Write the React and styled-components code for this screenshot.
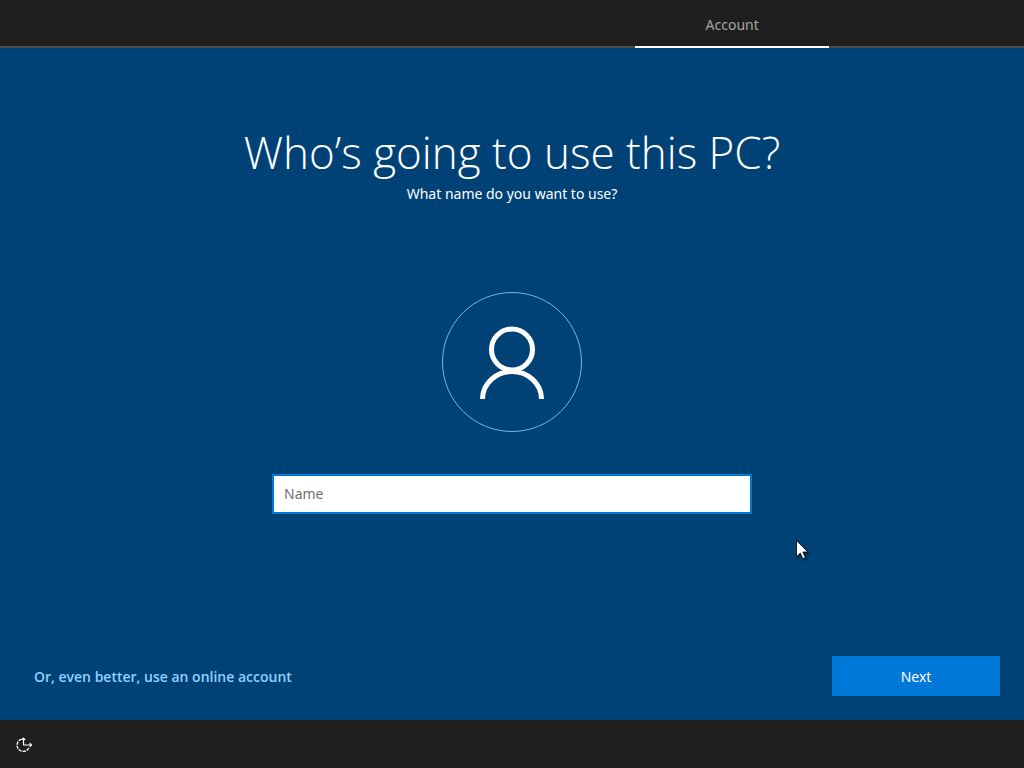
import React from 'react';
import styled, { createGlobalStyle } from 'styled-components';

const GlobalStyle = createGlobalStyle`
  *, *::before, *::after { box-sizing: border-box; }
  body {
    margin: 0;
    background: #004275;
    color: #fff;
    font: 14px/20px "Noto Sans", "Open Sans", sans-serif;
  }
`;

const Screen = styled.div`
  position: relative;
  display: flex;
  flex-direction: column;
  min-height: 100vh;
  overflow: hidden;
`;

const Steps = styled.nav`
  display: flex;
  justify-content: flex-end;
  height: 48px;
  background: #1f1f1f;
  box-shadow: inset 0 -2px #4b4b4b;
`;

const Step = styled.a`
  display: flex;
  align-items: center;
  justify-content: center;
  width: 19%;
  margin-right: 19%;
  padding-top: 2px;
  border-top: 2px solid transparent;
  border-bottom: 2px solid #fff;
  color: #a6a6a6;
  text-decoration: none;
`;

const Main = styled.main`
  flex: 1;
  display: flex;
  flex-direction: column;
  align-items: center;
  padding: 74px 24px 24px;
`;

const Title = styled.h1`
  margin: 0 0 2px;
  font-family: "Open Sans", "Noto Sans", sans-serif;
  font-size: 44px;
  line-height: 60px;
  font-weight: 300;
  text-align: center;
`;

const Prompt = styled.label`
  text-align: center;
`;

const Avatar = styled.svg`
  width: 140px;
  height: 140px;
  margin: 88px 0 42px;
  fill: none;
`;

const NameInput = styled.input`
  width: 480px;
  max-width: 100%;
  height: 40px;
  padding: 0 10px 2px;
  border: 2px solid #0078d7;
  border-radius: 0;
  outline: none;
  background: #fff;
  color: #000;
  font: inherit;

  &::placeholder { color: #717171; opacity: 1; }
`;

const Actions = styled.div`
  display: flex;
  align-items: center;
  justify-content: space-between;
  align-self: stretch;
  margin-top: auto;
  padding-left: 10px;
`;

const OnlineLink = styled.a`
  padding-top: 2px;
  color: #92d0ff;
  font-family: "Open Sans", "Noto Sans", sans-serif;
  font-weight: 600;
  text-decoration: none;
`;

const NextButton = styled.button`
  width: 168px;
  height: 40px;
  padding: 2px 0 0;
  border: 0;
  background: #0078d7;
  color: #fff;
  font: inherit;
`;

const Footer = styled.footer`
  display: flex;
  align-items: center;
  height: 48px;
  padding: 2px 14px 0;
  background: #1f1f1f;
`;

const IconButton = styled.button`
  display: flex;
  padding: 0;
  border: 0;
  background: none;
  color: #fff;
`;

const Pointer = styled.svg`
  position: absolute;
  top: 540px;
  left: calc(50% + 284px);
  filter: drop-shadow(2px 2px 1px rgba(0, 0, 0, 0.4));
  pointer-events: none;
`;

export default function App() {
  return (
    <Screen>
      <GlobalStyle />
      <Steps aria-label="Setup steps">
        <Step href="#account" aria-current="step">Account</Step>
      </Steps>
      <Main id="account">
        <Title>Who’s going to use this PC?</Title>
        <Prompt htmlFor="name">What name do you want to use?</Prompt>
        <Avatar viewBox="0 0 140 140" aria-hidden="true">
          <circle cx="70" cy="70" r="69.5" stroke="#76b5e5" />
          <circle cx="70" cy="57.5" r="20.5" stroke="#fff" strokeWidth="5" />
          <path d="M40.500 107A29.500 27.500 0 0 1 99.500 107" stroke="#fff" strokeWidth="5" />
        </Avatar>
        <NameInput id="name" type="text" placeholder="Name" />
        <Actions>
          <OnlineLink href="#online">Or, even better, use an online account</OnlineLink>
          <NextButton type="button">Next</NextButton>
        </Actions>
      </Main>
      <Footer>
        <IconButton type="button" aria-label="Ease of Access">
          <svg width="20" height="20" viewBox="0 0 20 20" fill="none" stroke="currentColor">
            <path d="M7.500 4.200A6.200 6.200 0 1 0 15 12.500" strokeWidth="1.400" strokeDasharray="3.200 1" />
            <path d="M9.500 3v7H17.500M7.800 4.800l1.700-1.700 1.700 1.700M15.700 8.200l1.800 1.800-1.800 1.800" strokeWidth="1.200" />
          </svg>
        </IconButton>
      </Footer>
      <Pointer width="12" height="20" viewBox="0 0 12 20" aria-hidden="true">
        <path d="M.5.5v16.200l3.800-3.600 2.500 5.600 2.600-1.100-2.500-5.600h5z" fill="#fff" stroke="#000" strokeWidth=".8" />
      </Pointer>
    </Screen>
  );
}
